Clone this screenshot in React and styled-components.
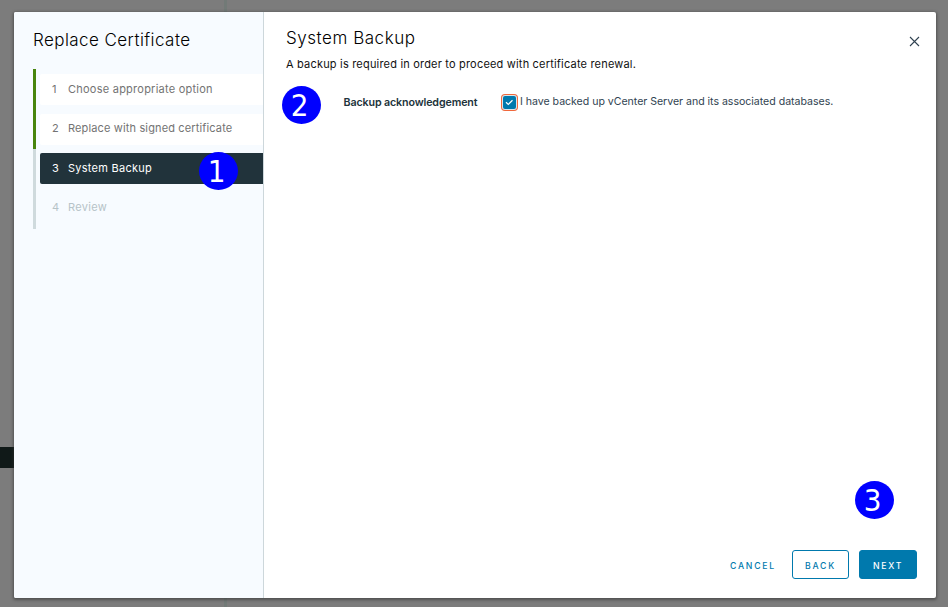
import React from 'react';
import styled, { createGlobalStyle } from 'styled-components';

const GlobalStyle = createGlobalStyle`
  * { box-sizing: border-box; }
  body {
    margin: 0;
    overflow: hidden;
    font-family: Inter, "Liberation Sans", sans-serif;
    font-size: 11px;
    color: #1b2a32;
  }
`;

const Backdrop = styled.div`
  position: relative;
  width: 948px;
  height: 607px;
  padding: 12px 12px 9px 14px;
  background:
    linear-gradient(#101918, #101918) 0 447px / 14px 21px no-repeat,
    linear-gradient(#727a77, #727a77) 224px 0 / 3px 607px no-repeat,
    #7c7c7c;
`;

const Dialog = styled.section`
  display: flex;
  height: 586px;
  border-radius: 2px;
  overflow: hidden;
  background: #fff;
  box-shadow: 0 1px 3px 1px rgba(45, 45, 45, 0.55);
`;

const Sidebar = styled.aside`
  width: 250px;
  flex: none;
  padding: 16px 0 0 19px;
  background: #f7fbff;
  border-right: 1px solid #cdd7db;
`;

const Title = styled.h1`
  margin: 0;
  font-size: 17px;
  font-weight: 300;
  line-height: 24px;
  letter-spacing: ${(p) => p.$spacing || '0'};
  color: #000;
  white-space: nowrap;
`;

const Steps = styled.ol`
  list-style: none;
  margin: 17px 0 0;
  padding: 5px 0 0 4px;
  height: 160px;
  display: flex;
  flex-direction: column;
  gap: 8.5px;
  border-left: 3px solid;
  border-image: linear-gradient(#48850e 50%, #cfdadd 50%) 1;
`;

const stepColors = { done: '#737373', current: '#fff', pending: '#b6c3c8' };

const Step = styled.li`
  display: flex;
  align-items: center;
  height: 31px;
  flex: none;
  padding: 0 0 2px 12px;
  border-radius: 2px 0 0 2px;
  color: ${(p) => stepColors[p.$state]};
  background: ${(p) => ({ done: '#fff', current: '#21333b', pending: 'transparent' })[p.$state]};
  letter-spacing: ${(p) => p.$spacing};
  white-space: nowrap;
`;

const StepNumber = styled.span`
  width: 16px;
  letter-spacing: 0;
`;

const Main = styled.main`
  display: flex;
  flex-direction: column;
  flex: 1;
  padding: 14px 19px 19px 22px;
`;

const Header = styled.header`
  display: flex;
  justify-content: space-between;
  height: 30px;
`;

const CloseButton = styled.button`
  width: 11px;
  height: 11px;
  margin: 10px -3px 0 0;
  padding: 0;
  border: 0;
  background: none;
  display: flex;
`;

const Intro = styled.p`
  margin: 0;
  line-height: 16px;
  letter-spacing: 0.19px;
  color: #111;
`;

const FormRow = styled.div`
  display: flex;
  align-items: center;
  height: 18px;
  margin-top: 21px;
  padding-left: 57.5px;
`;

const FieldLabel = styled.span`
  width: 159.5px;
  font-weight: 600;
  font-size: 10.7px;
  letter-spacing: -0.13px;
  color: #21333b;
  white-space: nowrap;
`;

const CheckLabel = styled.label`
  display: flex;
  align-items: center;
  gap: 4px;
  font-size: 10.6px;
  letter-spacing: -0.03px;
  color: #314351;
  white-space: nowrap;
`;

const CheckText = styled.span`
  padding-bottom: 2px;
`;

const Checkbox = styled.span`
  display: flex;
  align-items: center;
  justify-content: center;
  width: 13px;
  height: 13px;
  border-radius: 2px;
  background: #0079ad;
  box-shadow: 0 0 0 1px #d9e6ec, 0 0 0 2px #f0683c;
`;

const Footer = styled.footer`
  display: flex;
  align-items: center;
  justify-content: flex-end;
  gap: 10px;
  margin-top: auto;
`;

const Button = styled.button`
  width: ${(p) => p.$width}px;
  height: 29px;
  padding: 2px 0 0;
  border: 1px solid ${(p) => (p.$variant === 'link' ? 'transparent' : '#0079ad')};
  border-radius: 3px;
  background: ${(p) => (p.$variant === 'primary' ? '#0079ad' : 'transparent')};
  color: ${(p) => (p.$variant === 'primary' ? '#fff' : '#0079ad')};
  font: 500 8.7px Inter, sans-serif;
  letter-spacing: 1.75px;
`;

const Callout = styled.span`
  position: absolute;
  left: ${(p) => p.$x}px;
  top: ${(p) => p.$y}px;
  width: 39px;
  height: 38px;
  padding-right: 4px;
  border-radius: 50%;
  background: #00f;
  color: #fff;
  font: 31px/39px "DejaVu Sans Condensed", "DejaVu Sans", sans-serif;
  font-stretch: condensed;
  text-align: center;
`;

const steps = [
  { label: 'Choose appropriate option', state: 'done', spacing: '0.24px' },
  { label: 'Replace with signed certificate', state: 'done', spacing: '0.14px' },
  { label: 'System Backup', state: 'current', spacing: '0.26px' },
  { label: 'Review', state: 'pending', spacing: '0.3px' },
];

const callouts = [
  { n: 1, x: 199, y: 152 },
  { n: 2, x: 282, y: 86 },
  { n: 3, x: 855, y: 481 },
];

export default function App() {
  return (
    <>
      <GlobalStyle />
      <Backdrop>
        <Dialog>
          <Sidebar>
            <Title $spacing="0.43px">Replace Certificate</Title>
            <Steps>
              {steps.map((s, i) => (
                <Step key={s.label} $state={s.state} $spacing={s.spacing}>
                  <StepNumber>{i + 1}</StepNumber>
                  <span>{s.label}</span>
                </Step>
              ))}
            </Steps>
          </Sidebar>
          <Main>
            <Header>
              <Title as="h2" $spacing="0.54px">System Backup</Title>
              <CloseButton aria-label="Close">
                <svg width="11" height="11" viewBox="0 0 11 11" fill="none" stroke="#314351" strokeWidth="1.1">
                  <path d="M1 1l9 9M10 1l-9 9" />
                </svg>
              </CloseButton>
            </Header>
            <Intro>A backup is required in order to proceed with certificate renewal.</Intro>
            <FormRow>
              <FieldLabel>Backup acknowledgement</FieldLabel>
              <CheckLabel>
                <Checkbox>
                  <svg width="9" height="7" viewBox="0 0 9 7" fill="none" stroke="#fff" strokeWidth="1.2">
                    <path d="M1 3.2l2.3 2.2L7.5 1.3" />
                  </svg>
                </Checkbox>
                <CheckText>I have backed up vCenter Server and its associated databases.</CheckText>
              </CheckLabel>
            </FormRow>
            <Footer>
              <Button $variant="link" $width={58}>CANCEL</Button>
              <Button $variant="outline" $width={57}>BACK</Button>
              <Button $variant="primary" $width={58}>NEXT</Button>
            </Footer>
          </Main>
        </Dialog>
        {callouts.map((c) => (
          <Callout key={c.n} $x={c.x} $y={c.y}>{c.n}</Callout>
        ))}
      </Backdrop>
    </>
  );
}
